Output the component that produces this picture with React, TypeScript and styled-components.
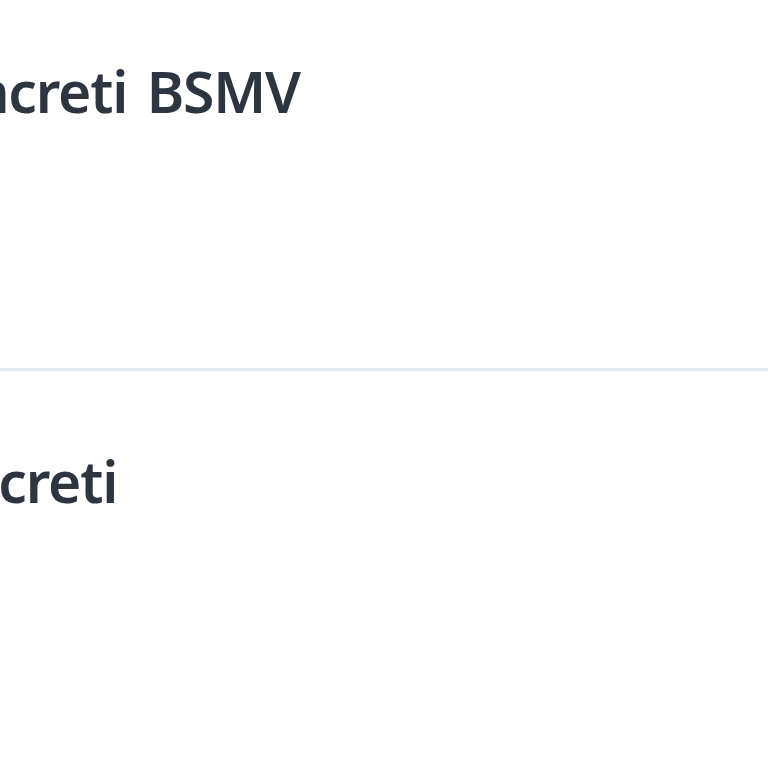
import styled, { createGlobalStyle } from "styled-components";

const Global = createGlobalStyle`
  html, body {
    margin: 0;
    padding: 0;
    background: #fff;
    overflow: hidden;
  }
`;

const Page = styled.div`
  width: 768px;
  height: 768px;
  overflow: hidden;
  margin-top: -19px;
`;

const Row = styled.section`
  height: 390px;
  box-sizing: border-box;
  border-bottom: 3px solid #e2e8f0;
  padding-top: 70px;
  overflow: hidden;
`;

const Title = styled.h2<{ $shift: number }>`
  margin: 0 0 0 ${(p) => p.$shift}px;
  font-family: "Noto Sans", "Open Sans", sans-serif;
  font-weight: 600;
  font-size: 57px;
  letter-spacing: -1.2px;
  word-spacing: 6px;
  line-height: 80px;
  color: #2d3540;
  white-space: nowrap;
`;

export default function App() {
  return (
    <Page>
      <Global />
      <Row>
        <Title $shift={-96}>Concreti BSMV</Title>
      </Row>
      <Row>
        <Title $shift={-106}>Concreti</Title>
      </Row>
    </Page>
  );
}
